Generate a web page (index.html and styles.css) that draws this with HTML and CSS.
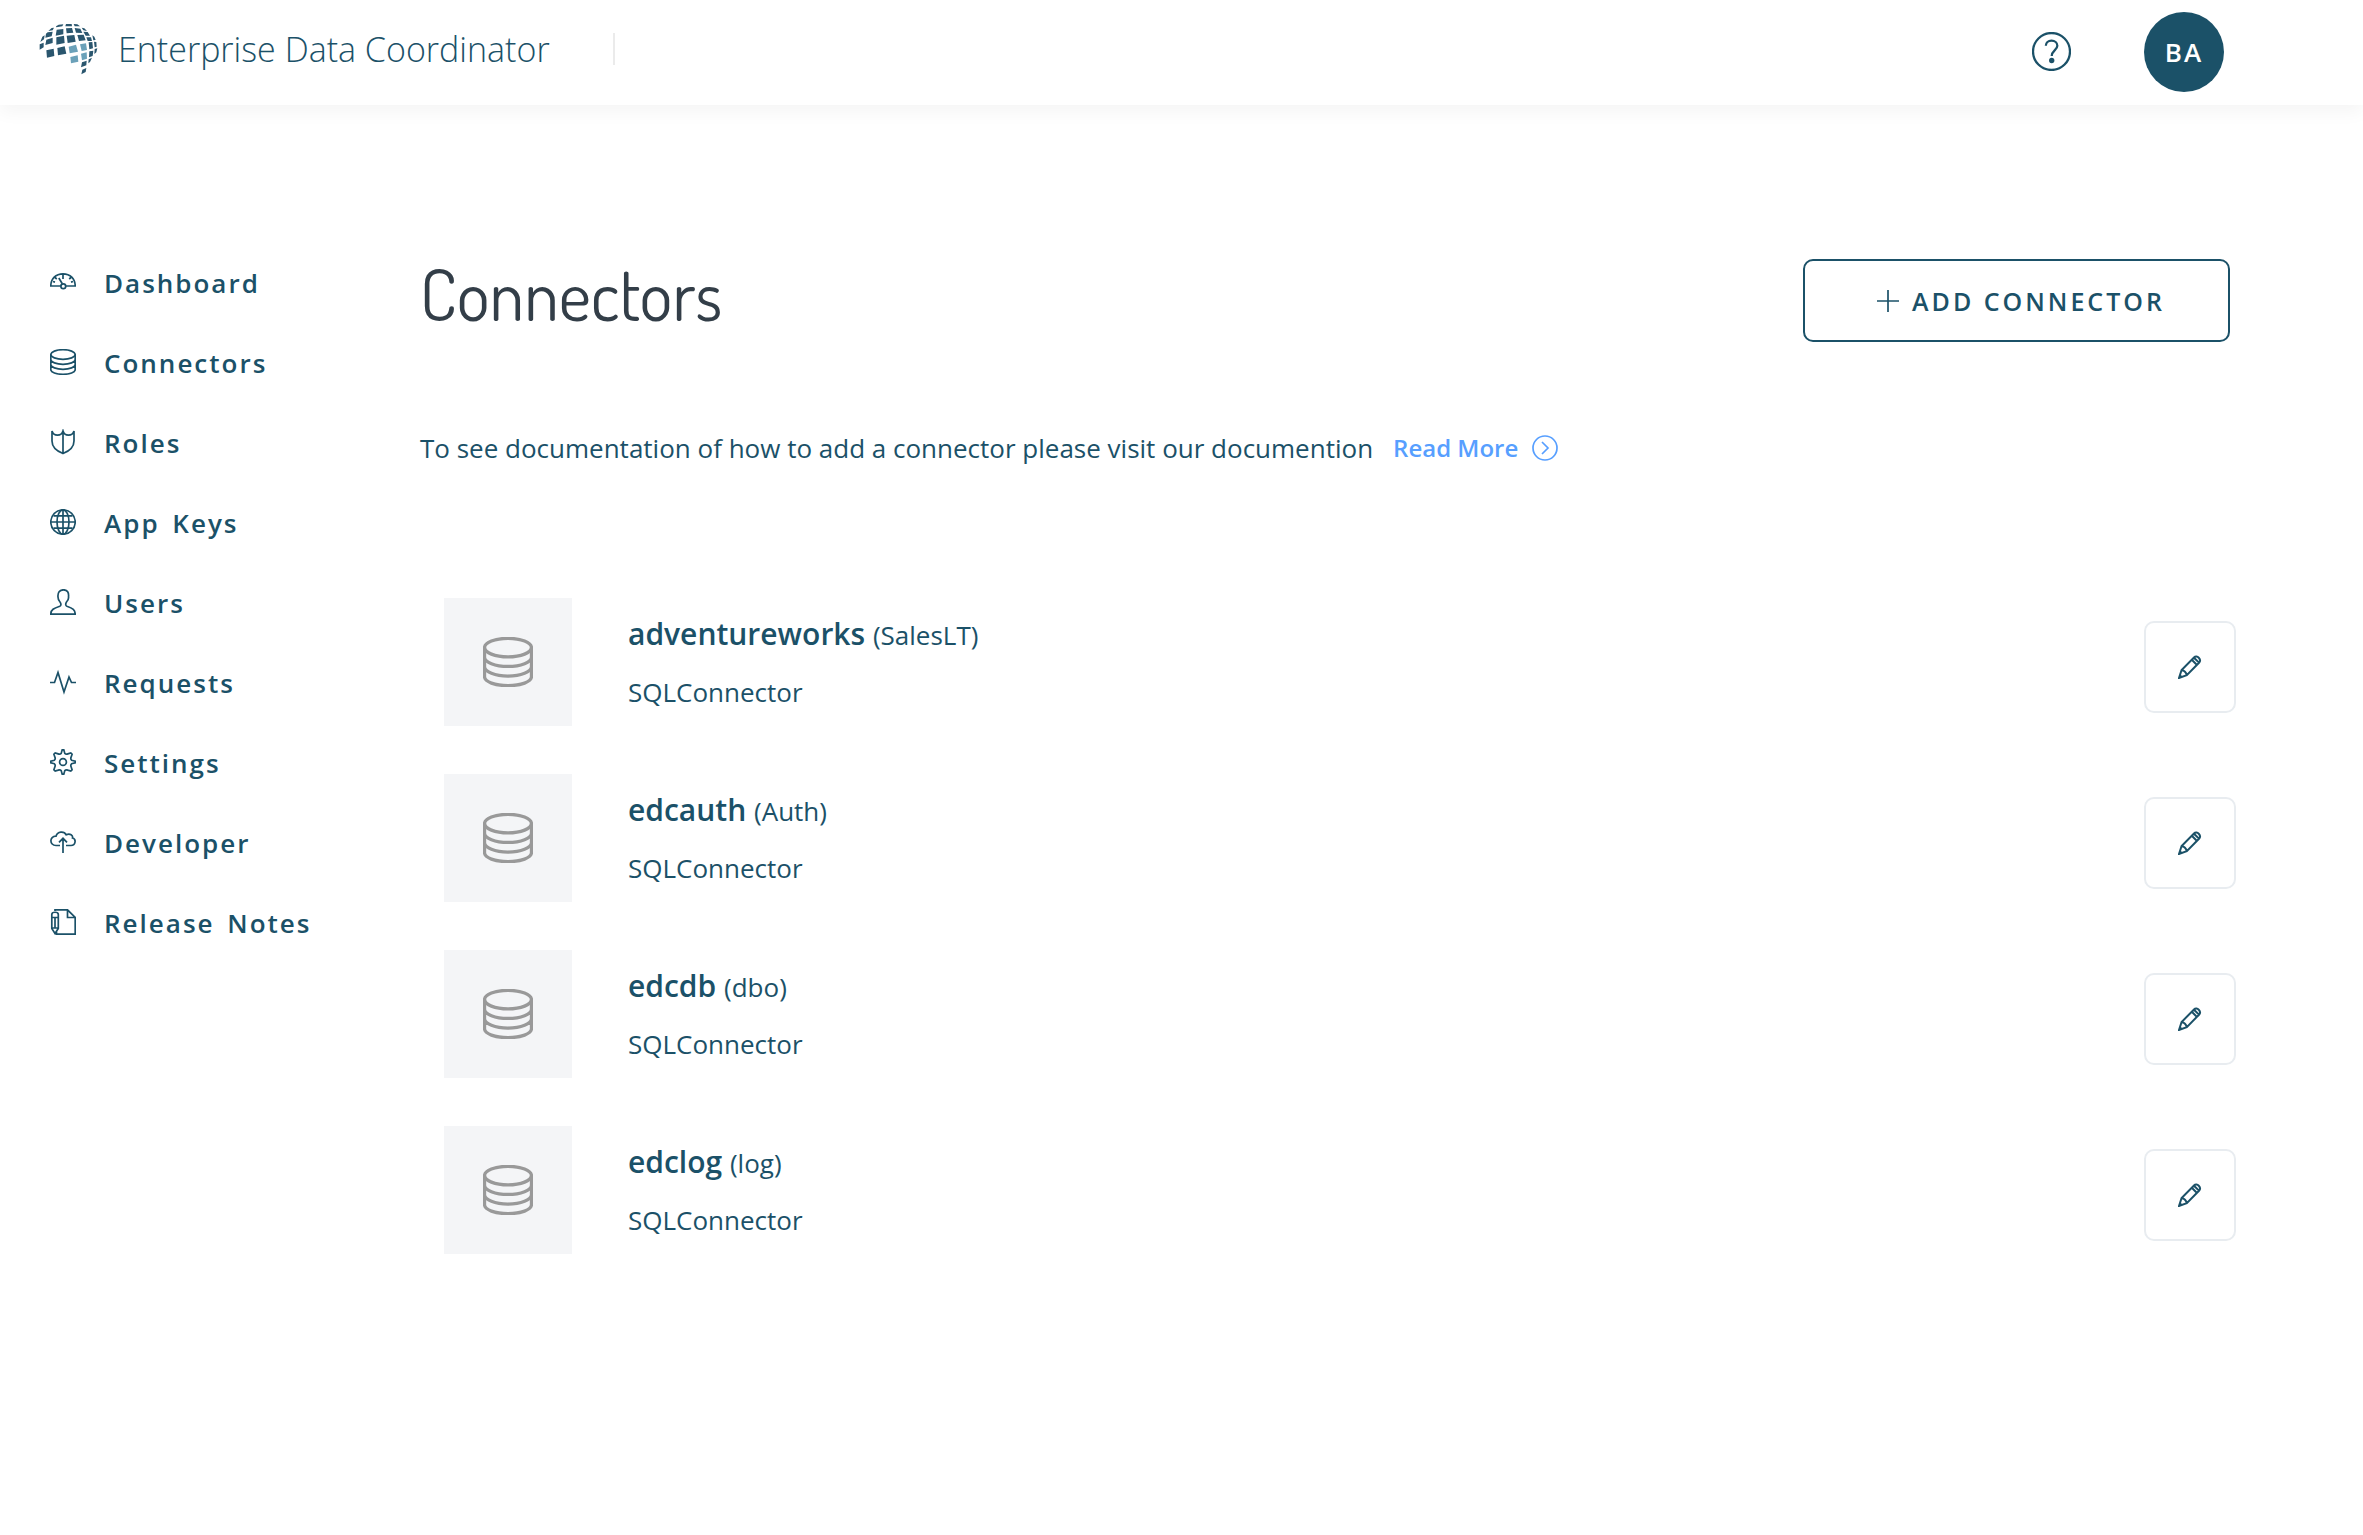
FILE: index.html
```html
<!DOCTYPE html>
<html lang="en">
<head>
<meta charset="utf-8">
<meta name="viewport" content="width=device-width, initial-scale=1">
<title>Connectors - Enterprise Data Coordinator</title>
<link rel="stylesheet" href="styles.css">
</head>
<body>
<svg class="sprite" aria-hidden="true">
  <symbol id="database" viewBox="0 0 26 26">
    <ellipse cx="13" cy="5.5" rx="12.2" ry="4.8"/>
    <path d="M.8 5.5v15.2c0 2.6 5.500 4.600 12.200 4.600s12.200-2 12.200-4.600V5.500M.8 10.500c0 2.600 5.500 4.800 12.200 4.800s12.200-2.200 12.200-4.800M.8 15.500c0 2.600 5.500 4.800 12.200 4.800s12.200-2.200 12.200-4.800"/>
  </symbol>
  <symbol id="pencil" viewBox="0 0 24 24">
    <path d="M1 23l2.600-8L16 2.500c3-3 8 2 5 5.200L8.800 20.200zM3.600 15c2.400.4 4.600 2.600 5.200 5.200M13.800 4.800l5.200 5.200M16 2.700l5.200 5.200M2 20.500l1.500 1.500"/>
  </symbol>
</svg>

<header class="topbar">
  <a class="brand" href="#">
    <svg class="logo" viewBox="58 66 177 156" aria-hidden="true">
      <path class="logo-dark" d="M109 76l8-5 14-1-3 6-18 3zM139 69h17l1 7h-20zM162 69l11 1 8 6h-16zM86 90l10-9 7-1-4 8zM186 80l8 2 8 8-11-2zM79 98l5-4 15-2-3 14-19 4zM111 86l20-2v16l-23 4zM139 82l18-1 4 14-20 2zM165 81l17 2 6 13-19-1zM191 92l13 1 7 11h-13zM63 120l5-13 7-4-2 12-11 8zM80 116l19-6v16l-22 6zM110 109l23-5 2 22-25 5zM141 104l23-2 4 20-24 4zM173 102l19-1 6 17-20 2zM200 109h14l3 11h-13zM218 103l6 4 4 10-7 1zM60 130l12-5v14l-12 7zM80 148l22-5 2 22-22 5zM113 141l22-5 5 22-25 5zM207 124l11-1 2 19-11 3zM223 122l7 1 1 14-6 2zM209 151l12-2-2 16-11 4zM225 144l8-2-3 12-6 5zM187 184l14-5-1 14-16 6zM207 175l10-5-6 13-5 4zM188 206l12-5-2 12-13 7z"/>
      <path class="logo-light" d="M147 137l22-6 6 21-25 5zM181 130l18-3 3 20-16 3zM152 168l22-5 2 19-22 5zM184 158l17-4 1 19-15 5z"/>
    </svg>
    <span class="brand-name">Enterprise Data Coordinator</span>
  </a>
  <span class="divider"></span>
  <div class="account">
    <button class="help" type="button" aria-label="Help">
      <svg class="icon" viewBox="0 0 38 38" aria-hidden="true"><circle cx="19" cy="19" r="18"/><path d="M13.500 13.500c0-3 2.300-5 5.500-5s5.700 2 5.700 5c0 4-5.500 4.600-5.500 10"/><circle class="dot" cx="19.200" cy="27.800" r="2.600"/></svg>
    </button>
    <button class="avatar" type="button">BA</button>
  </div>
</header>

<div class="layout">
  <nav class="sidebar" aria-label="Main">
    <a class="nav-link" href="#"><svg class="icon" viewBox="0 0 26 26" aria-hidden="true"><path d="M11 17H.8C.8 9.500 5.800 4.800 13 4.800S25.200 9.500 25.200 17H15.500M13 5v5M12.300 14.800L8.800 9M5 8.500l1.800 1.500M21 8.500L19.200 10M3 12.500l2 .6M23 12.500l-2 .6"/><circle cx="13.300" cy="17.200" r="2.400"/></svg>Dashboard</a>
    <a class="nav-link" href="#" aria-current="page"><svg class="icon" aria-hidden="true"><use href="#database"/></svg>Connectors</a>
    <a class="nav-link" href="#"><svg class="icon" viewBox="0 0 26 26" aria-hidden="true"><path d="M2 2v10c0 6 4.500 10 11 12.500C19.500 22 24 18 24 12V2c-1.500 5.500-9.500 5.500-11 0C11.500 7.500 3.500 7.500 2 2zM13 2v22"/></svg>Roles</a>
    <a class="nav-link" href="#"><svg class="icon" viewBox="0 0 26 26" aria-hidden="true"><circle cx="13" cy="13" r="12.200"/><ellipse cx="13" cy="13" rx="6" ry="12.200"/><path d="M13 .8v24.400M.8 13h24.400M3.500 6.800h19M3.500 19.200h19"/></svg>App Keys</a>
    <a class="nav-link" href="#"><svg class="icon" viewBox="0 0 26 26" aria-hidden="true"><path d="M.8 25.200c0-4.500 3-6 9-8 1.600-.6 1.400-2.700.2-4.200-1.200-1.200-2-3.200-2-5C7.600 3.500 9.500.8 13.500.8s5.500 2.700 5 7.200c.3 2-.8 3.800-2 5-1 1.500-1.200 3.600.4 4.200 6 2 8.300 3.500 8.300 8z"/></svg>Users</a>
    <a class="nav-link" href="#"><svg class="icon" viewBox="0 0 26 26" aria-hidden="true"><path d="M0 13.500h4.500L8 3.500l6 19.500 5-15 2.500 5.500H26"/></svg>Requests</a>
    <a class="nav-link" href="#"><svg class="icon" viewBox="0 0 26 26" aria-hidden="true"><path d="M12.200 .8H13.800L14.800 4.400Q16 5.700 17.800 4.900L20.800 3.900L22.100 5.200L21.100 8.200Q20.300 10 21.600 11.200L25.200 12.200V13.800L21.600 14.800Q20.300 16 21.100 17.800L22.100 20.800L20.800 22.100L17.800 21.100Q16 20.300 14.800 21.600L13.800 25.200H12.200L11.200 21.600Q10 20.300 8.200 21.100L5.200 22.100L3.900 20.800L4.900 17.800Q5.700 16 4.400 14.800L.8 13.800V12.200L4.400 11.200Q5.700 10 4.900 8.200L3.900 5.200L5.200 3.900L8.200 4.900Q10 5.700 11.200 4.400Z"/><circle cx="13" cy="13" r="3.400"/></svg>Settings</a>
    <a class="nav-link" href="#"><svg class="icon" viewBox="0 0 26 26" aria-hidden="true"><path d="M10 16.500H6C-.8 16.500-.8 7 6 7.200 7.500 2.300 14 1.800 16.200 5.800c4-2 7 1 6.300 3.200 4 1 3.200 7.500-1.500 7.500h-5M13 24V9.500M9 13.300l4-4 4 4"/></svg>Developer</a>
    <a class="nav-link" href="#"><svg class="icon" viewBox="0 0 26 26" aria-hidden="true"><path d="M5 2V.8h12.500l7.700 7.700v16.700H6.500v-2.500M17.500.8v7.700h7.700M1.800 5.500c0-3 6.500-3 6.500 0v14L5 24.500l-3.200-5zM1.800 8.500h6.500M5 8.500v11M1.800 19h6.500"/></svg>Release Notes</a>
  </nav>

  <main class="content">
    <div class="page-head">
      <h1 class="page-title">Connectors</h1>
      <button class="add-button" type="button"><svg class="icon" viewBox="0 0 24 24" aria-hidden="true"><path d="M12 1v22M1 12h22"/></svg>ADD CONNECTOR</button>
    </div>
    <p class="intro">To see documentation of how to add a connector please visit our documention
      <a class="read-more" href="#">Read More<svg class="icon" viewBox="0 0 26 26" aria-hidden="true"><circle cx="13" cy="13" r="12"/><path d="M10 7l6 6-6 6"/></svg></a>
    </p>
    <ul class="connectors">
      <li class="connector">
        <span class="tile"><svg class="icon" aria-hidden="true"><use href="#database"/></svg></span>
        <div class="details"><h2 class="name">adventureworks <span class="schema">(SalesLT)</span></h2><p class="kind">SQLConnector</p></div>
        <button class="edit" type="button" aria-label="Edit adventureworks"><svg class="icon" aria-hidden="true"><use href="#pencil"/></svg></button>
      </li>
      <li class="connector">
        <span class="tile"><svg class="icon" aria-hidden="true"><use href="#database"/></svg></span>
        <div class="details"><h2 class="name">edcauth <span class="schema">(Auth)</span></h2><p class="kind">SQLConnector</p></div>
        <button class="edit" type="button" aria-label="Edit edcauth"><svg class="icon" aria-hidden="true"><use href="#pencil"/></svg></button>
      </li>
      <li class="connector">
        <span class="tile"><svg class="icon" aria-hidden="true"><use href="#database"/></svg></span>
        <div class="details"><h2 class="name">edcdb <span class="schema">(dbo)</span></h2><p class="kind">SQLConnector</p></div>
        <button class="edit" type="button" aria-label="Edit edcdb"><svg class="icon" aria-hidden="true"><use href="#pencil"/></svg></button>
      </li>
      <li class="connector">
        <span class="tile"><svg class="icon" aria-hidden="true"><use href="#database"/></svg></span>
        <div class="details"><h2 class="name">edclog <span class="schema">(log)</span></h2><p class="kind">SQLConnector</p></div>
        <button class="edit" type="button" aria-label="Edit edclog"><svg class="icon" aria-hidden="true"><use href="#pencil"/></svg></button>
      </li>
    </ul>
  </main>
</div>
</body>
</html>
```
FILE: styles.css
```css
:root {
  --navy: #1b5168;
  --sky: #579fff;
}

* {
  box-sizing: border-box;
}

body {
  margin: 0;
  background: #fff;
  color: var(--navy);
  font-family: "Open Sans", sans-serif;
  font-size: 26px;
  line-height: 36px;
}

a {
  color: inherit;
  text-decoration: none;
}

button {
  padding: 0;
  border: 0;
  background: none;
  color: inherit;
  font: inherit;
  cursor: pointer;
}

h1, h2, p, ul {
  margin: 0;
  padding: 0;
}

.sprite {
  position: absolute;
  width: 0;
  height: 0;
}

.icon {
  flex: none;
  width: 26px;
  height: 26px;
  fill: none;
  stroke: currentColor;
  stroke-width: 1.7;
}

/* Top bar */
.topbar {
  display: flex;
  align-items: center;
  height: 105px;
  padding: 0 139px 2px 39px;
  box-shadow: 0 8px 16px rgba(0, 0, 0, 0.04);
}

.brand {
  display: flex;
  align-items: center;
  gap: 20px;
  padding-bottom: 6px;
}

.logo {
  width: 59px;
  height: 52px;
}

.logo-dark {
  fill: #2a566e;
}

.logo-light {
  fill: #6ba1b9;
}

.brand-name {
  font-size: 34px;
  font-weight: 300;
  line-height: 48px;
}

.divider {
  width: 2px;
  height: 32px;
  margin: 0 0 6px 63px;
  background: #ebebeb;
}

.account {
  display: flex;
  align-items: center;
  gap: 73px;
  margin-left: auto;
}

.help {
  display: flex;
}

.help .icon {
  width: 39px;
  height: 39px;
  stroke-width: 2.2;
}

.help .dot {
  fill: currentColor;
  stroke: none;
}

.avatar {
  width: 80px;
  height: 80px;
  border-radius: 50%;
  background: var(--navy);
  color: #fff;
  font-weight: 600;
  letter-spacing: 2px;
}

/* Page */
.layout {
  display: grid;
  grid-template-columns: 420px 1fr;
  padding: 138px 127px 64px 0;
}

.sidebar {
  display: flex;
  flex-direction: column;
  padding-left: 50px;
}

.nav-link {
  display: flex;
  align-items: center;
  gap: 28px;
  height: 80px;
  font-weight: 600;
  letter-spacing: 2px;
  word-spacing: 4px;
}

.nav-link .icon {
  margin-bottom: 3px;
}

.content {
  padding-top: 16px;
}

.page-head {
  display: flex;
  align-items: flex-start;
  justify-content: space-between;
  padding-right: 6px;
}

.page-title {
  color: #333e48;
  font-family: "Dosis", "Liberation Sans Narrow", Roboto, sans-serif;
  font-size: 70px;
  font-weight: 400;
  line-height: 70px;
}

.add-button {
  display: flex;
  align-items: center;
  justify-content: center;
  gap: 12px;
  width: 427px;
  height: 83px;
  padding-left: 8px;
  border: 2px solid var(--navy);
  border-radius: 10px;
  font-size: 25px;
  font-weight: 600;
  letter-spacing: 3px;
}

.add-button .icon {
  width: 24px;
  height: 24px;
}

.intro {
  display: flex;
  align-items: center;
  gap: 20px;
  margin-top: 88px;
}

.read-more {
  display: flex;
  align-items: center;
  gap: 14px;
  color: var(--sky);
  font-size: 24px;
  font-weight: 600;
}

/* Connector list */
.connectors {
  display: grid;
  gap: 48px;
  margin-top: 132px;
  padding-left: 24px;
  list-style: none;
}

.connector {
  display: flex;
  align-items: center;
}

.tile {
  display: flex;
  align-items: center;
  justify-content: center;
  width: 128px;
  height: 128px;
  margin-right: 56px;
  background: #f4f5f7;
  color: #999;
}

.tile .icon {
  width: 50px;
  height: 50px;
}

.details {
  flex: 1;
}

.name {
  margin-bottom: 19px;
  font-size: 30px;
  font-weight: 600;
  line-height: 40px;
}

.schema {
  font-size: 26px;
  font-weight: 400;
}

.edit {
  display: flex;
  align-items: center;
  justify-content: center;
  width: 92px;
  height: 92px;
  margin-top: 10px;
  border: 2px solid #e8ecf0;
  border-radius: 10px;
}

.edit .icon {
  width: 24px;
  height: 24px;
  stroke-width: 2;
}
```
